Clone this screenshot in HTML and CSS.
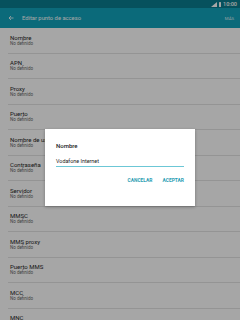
FILE: index.html
```html
<!DOCTYPE html>
<html lang="es">
<head>
<meta charset="utf-8">
<link rel="stylesheet" href="styles.css">
</head>
<body>
<div class="screen">
  <div class="statusbar">
    <svg class="signal" width="6" height="5" viewBox="0 0 6 5"><polygon points="0,5 6,5 6,0" fill="#fff"/></svg>
    <span class="battery"></span>
    <span class="time">10:00</span>
  </div>
  <div class="appbar">
    <svg class="back" width="6" height="6" viewBox="0 0 6 6"><path d="M5.5 3H1M3 1L1 3l2 2" stroke="#fff" stroke-width="0.8" fill="none"/></svg>
    <span class="title">Editar punto de acceso</span>
    <span class="more">MÁS</span>
  </div>
  <div class="list">
    <div class="item"><div class="t">Nombre</div><div class="s">No definido</div></div>
    <div class="item"><div class="t">APN</div><div class="s">No definido</div></div>
    <div class="item"><div class="t">Proxy</div><div class="s">No definido</div></div>
    <div class="item"><div class="t">Puerto</div><div class="s">No definido</div></div>
    <div class="item"><div class="t">Nombre de usuario</div><div class="s">No definido</div></div>
    <div class="item"><div class="t">Contraseña</div><div class="s">No definido</div></div>
    <div class="item"><div class="t">Servidor</div><div class="s">No definido</div></div>
    <div class="item"><div class="t">MMSC</div><div class="s">No definido</div></div>
    <div class="item"><div class="t">MMS proxy</div><div class="s">No definido</div></div>
    <div class="item"><div class="t">Puerto MMS</div><div class="s">No definido</div></div>
    <div class="item"><div class="t">MCC</div><div class="s">No definido</div></div>
    <div class="item"><div class="t">MNC</div><div class="s">No definido</div></div>
  </div>
  <div class="scrim"></div>
  <div class="dialog">
    <div class="dtitle">Nombre</div>
    <div class="input">Vodafone Internet</div>
    <div class="actions">
      <span class="btn">CANCELAR</span>
      <span class="btn">ACEPTAR</span>
    </div>
  </div>
</div>
</body>
</html>
```
FILE: styles.css
```css
* { box-sizing: border-box; margin: 0; padding: 0; }
html, body { width: 240px; height: 320px; overflow: hidden; }
body { font-family: Roboto, "Noto Sans", sans-serif; background: #fff; }
.screen { position: relative; width: 240px; height: 320px; overflow: hidden; display: flex; flex-direction: column; }
.statusbar {
  flex: none; height: 8px; background: #0a7d90; display: flex; align-items: center; justify-content: flex-end;
  padding-right: 3px; gap: 1px; color: #fff; font-size: 5.5px; line-height: 8px;
}
.signal { margin-right: 1px; }
.battery { width: 2.5px; height: 5px; background: #fff; border-radius: 0.5px; margin-right: 1px; }
.time { font-weight: 500; }
.appbar {
  flex: none; height: 20px; background: #11a4bc; display: flex; align-items: center; padding: 0 6px 0 8px; color: #fff;
}
.back { margin-right: 8px; }
.title { font-size: 5.8px; flex: 1; }
.more { font-size: 4.3px; color: #e0f2f5; }
.list { flex: none; display: flex; flex-direction: column; }
.item {
  height: 25.5px; padding: 5.5px 0 0 2px; margin: 0 0 0 8px; border-bottom: 0.8px solid #e4e4e4; flex: none;
}
.t { font-size: 6px; line-height: 7px; color: #1e1e1e; white-space: nowrap; }
.s { font-size: 4.5px; line-height: 6px; color: #666; }
.scrim { position: absolute; inset: 0; background: rgba(0,0,0,0.35); }
.dialog {
  position: absolute; left: 45px; top: 129px; width: 150px; height: 77px; background: #fff;
  box-shadow: 0 1px 3px rgba(0,0,0,0.3); padding: 13px 11px 0 11px; display: flex; flex-direction: column;
}
.dtitle { font-size: 6px; line-height: 8px; font-weight: 500; color: #222; }
.input {
  margin-top: 8px; font-size: 5.4px; line-height: 7px; color: #222; border-bottom: 1px solid #6cc7d6;
  padding-bottom: 0.5px;
}
.actions { display: flex; justify-content: flex-end; gap: 10px; margin-top: 10px; }
.btn { font-size: 4.9px; line-height: 6px; font-weight: 700; color: #2a9db2; }
```
